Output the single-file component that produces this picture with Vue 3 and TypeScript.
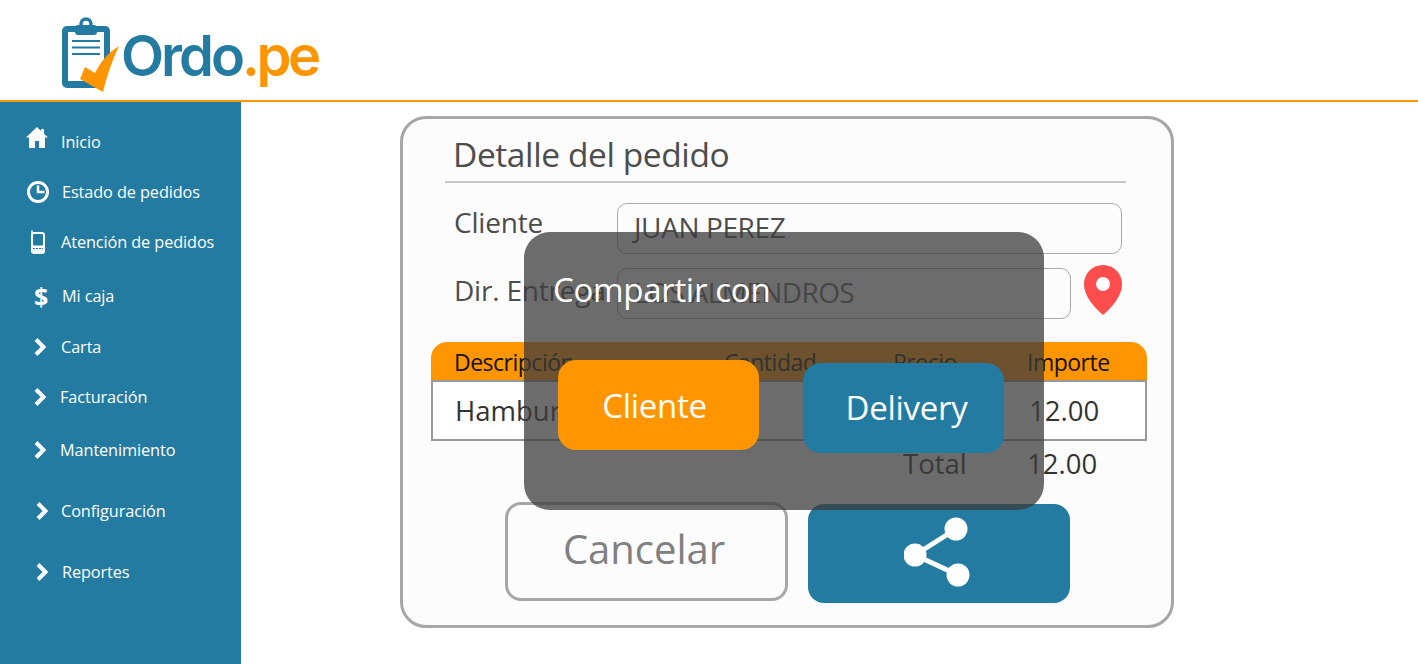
<script setup lang="ts">
interface IMenuItem {
  label: string
  icon: string
  iconX: number
  textX: number
  gap: number
}

const menu: IMenuItem[] = [
  { label: 'Inicio', icon: 'home', iconX: 37, textX: 61, gap: 0 },
  { label: 'Estado de pedidos', icon: 'clock', iconX: 38, textX: 62, gap: 10 },
  { label: 'Atención de pedidos', icon: 'phone', iconX: 38, textX: 61, gap: 10 },
  { label: 'Mi caja', icon: 'dollar', iconX: 41, textX: 62, gap: 14 },
  { label: 'Carta', icon: 'chevron', iconX: 40, textX: 61, gap: 11 },
  { label: 'Facturación', icon: 'chevron', iconX: 40, textX: 60, gap: 10 },
  { label: 'Mantenimiento', icon: 'chevron', iconX: 40, textX: 60, gap: 13 },
  { label: 'Configuración', icon: 'chevron', iconX: 42, textX: 61, gap: 21 },
  { label: 'Reportes', icon: 'chevron', iconX: 42, textX: 62, gap: 21 }
]
</script>

<template>
  <div class="page">
    <header class="topbar">
      <svg class="logo-icon" width="60" height="76" viewBox="0 0 60 76">
        <rect x="1" y="9" width="48" height="62" rx="5" fill="#237ba1" />
        <rect x="7" y="15" width="36" height="49" fill="#fff" />
        <circle cx="25" cy="7" r="5" fill="none" stroke="#237ba1" stroke-width="3.5" />
        <rect x="14" y="8" width="22" height="10" rx="3" fill="#237ba1" />
        <path d="M11 24h28M11 30.500h28M11 37h28" stroke="#237ba1" stroke-width="2" />
        <path d="M40 71h10v-30z" fill="#fff" />
        <path d="M19 62l5-12 10 6C40 44 48 35 58 29 52 42 46 58 42 75z" fill="#ff9500" />
      </svg>
      <div class="logo-text">Ordo<span class="logo-accent">.pe</span></div>
    </header>

    <div class="body-row">
      <aside class="sidebar">
        <ul class="menu">
          <li
            v-for="item in menu"
            :key="item.label"
            class="menu-item"
            :style="{ marginTop: item.gap + 'px' }"
          >
            <span class="menu-icon-cell" :style="{ width: item.textX + 'px' }">
              <span class="menu-icon" :style="{ marginLeft: item.iconX - 12 + 'px' }">
                <svg v-if="item.icon === 'home'" class="icon-home" width="24" height="24" viewBox="0 0 24 24" fill="#fff">
                  <path d="M12 1L1 11.500h3V22h6v-7h4v7h6V11.500h3l-4-3.800V3h-3v1.900z" />
                </svg>
                <svg v-else-if="item.icon === 'clock'" width="24" height="24" viewBox="0 0 24 24" fill="none" stroke="#fff">
                  <circle cx="12" cy="12" r="9.500" stroke-width="3" />
                  <path d="M12 5.500v6.500h6.500" stroke-width="2.500" />
                </svg>
                <svg v-else-if="item.icon === 'phone'" width="24" height="24" viewBox="0 0 24 24">
                  <path d="M6 0.500v3" stroke="#fff" stroke-width="1.500" />
                  <rect x="5" y="2" width="14" height="22" rx="3" fill="#fff" />
                  <rect x="7" y="4" width="10" height="11.500" rx="1" fill="#237ba1" />
                  <path d="M7 18.500h10" stroke="#237ba1" stroke-width="1" stroke-dasharray="2 1" />
                </svg>
                <span v-else-if="item.icon === 'dollar'" class="dollar">$</span>
                <svg v-else width="24" height="24" viewBox="0 0 24 24" fill="none" stroke="#fff">
                  <path d="M8 4.500l7.500 7.500L8 19.500" stroke-width="4" />
                </svg>
              </span>
            </span>
            <span class="menu-label">{{ item.label }}</span>
          </li>
        </ul>
      </aside>

      <main class="content">
        <section class="card">
          <h1 class="card-title">Detalle del pedido</h1>

          <div class="field field-client">
            <label class="field-label">Cliente</label>
            <div class="field-input wide">JUAN PEREZ</div>
          </div>
          <div class="field field-address">
            <label class="field-label">Dir. Entrega</label>
            <div class="field-input narrow">LOS ALMENDROS</div>
            <svg class="pin" width="38" height="50" viewBox="0 0 38 50">
              <path
                d="M19 0C8.500 0 0 8.500 0 19c0 13 12 25 19 31 7-6 19-18 19-31C38 8.500 29.500 0 19 0z"
                fill="#ff4d4d"
              />
              <circle cx="19" cy="19" r="7" fill="#fcfcfc" />
            </svg>
          </div>

          <div class="table">
            <div class="table-row table-head">
              <span>Descripción</span>
              <span>Cantidad</span>
              <span>Precio</span>
              <span>Importe</span>
            </div>
            <div class="table-row table-line">
              <span class="line-name">Hamburguesa</span>
              <span></span>
              <span></span>
              <span>12.00</span>
            </div>
            <div class="table-row table-total">
              <span></span>
              <span></span>
              <span class="total-label">Total</span>
              <span>12.00</span>
            </div>
          </div>

          <div class="actions">
            <button class="btn-cancel">Cancelar</button>
            <button class="btn-share">
              <svg width="70" height="74" viewBox="0 0 70 74" fill="#fff">
                <path d="M11 38L52 12M11 38l43 20" stroke="#fff" stroke-width="5" />
                <circle cx="52" cy="12" r="11.500" />
                <circle cx="11" cy="38" r="11.500" />
                <circle cx="54" cy="58" r="11.500" />
              </svg>
            </button>
          </div>
        </section>

        <div class="share-panel">
          <div class="share-title">Compartir con</div>
          <div class="share-buttons">
            <button class="share-option orange">Cliente</button>
            <button class="share-option blue">Delivery</button>
          </div>
        </div>
      </main>
    </div>
  </div>
</template>

<style>
html,
body {
  margin: 0;
  background: #fff;
}
</style>

<style scoped>
.page {
  display: flex;
  flex-direction: column;
  height: 664px;
  overflow: hidden;
  font-family: "Open Sans", "Noto Sans", sans-serif;
}

.topbar {
  display: flex;
  align-items: flex-start;
  box-sizing: border-box;
  height: 102px;
  padding: 17px 0 0 61px;
  border-bottom: 2px solid #ff9500;
  background: #fff;
}

.logo-icon {
  flex: none;
}

.logo-text {
  margin: 9px 0 0 0;
  font-family: "Inter", sans-serif;
  font-size: 56px;
  font-weight: 600;
  line-height: 60px;
  letter-spacing: -3px;
  color: #237ba1;
}

.logo-accent {
  letter-spacing: -3.500px;
  color: #ff9500;
}

.body-row {
  position: relative;
  display: flex;
  flex: 1;
}

.sidebar {
  flex: none;
  width: 241px;
  background: #237ba1;
}

.menu {
  margin: 0;
  padding: 20px 0 0;
  list-style: none;
}

.menu-item {
  display: flex;
  align-items: center;
  height: 40px;
  color: #fff;
  font-size: 16.300px;
  letter-spacing: -0.1px;
}

.menu-icon-cell {
  display: block;
  flex: none;
}

.menu-icon {
  display: block;
  width: 24px;
  height: 24px;
  text-align: center;
}

.icon-home {
  margin-top: -4px;
}

.dollar {
  font-size: 25px;
  font-weight: 700;
  line-height: 24px;
}

.content {
  flex: 1;
  padding: 14px 0 0 159px;
}

.card {
  box-sizing: border-box;
  width: 774px;
  height: 512px;
  padding: 11px 28px 0 28px;
  border: 3px solid #a6a6a6;
  border-radius: 26px;
  background: #fcfcfc;
  color: #4d4d4d;
}

.card-title {
  box-sizing: border-box;
  width: 681px;
  height: 53px;
  margin: 0 0 20px 14px;
  padding-left: 8px;
  border-bottom: 2px solid #c8c8c8;
  font-size: 33.500px;
  font-weight: 400;
  line-height: 48px;
  letter-spacing: -0.4px;
}

.field {
  display: flex;
  align-items: flex-start;
  margin-left: 23px;
}

.field-client {
  margin-bottom: 14px;
}

.field-address {
  margin-bottom: 23px;
}

.field-label {
  flex: none;
  width: 163px;
  font-size: 28px;
  line-height: 38px;
  letter-spacing: -0.2px;
}

.field-address .field-label {
  margin-top: 3px;
}

.field-input {
  box-sizing: border-box;
  height: 51px;
  padding: 4px 0 0 16px;
  border: 1.500px solid #aaa;
  border-radius: 10px;
  font-size: 28px;
  line-height: 38px;
  letter-spacing: -0.4px;
}

.wide {
  width: 505px;
}

.narrow {
  width: 454px;
  color: #666;
  letter-spacing: -0.6px;
}

.pin {
  flex: none;
  margin: -3px 0 0 13px;
}

.table {
  width: 716px;
}

.table-row {
  display: grid;
  grid-template-columns: 270px 169px 134px 1fr;
  box-sizing: border-box;
  padding-left: 23px;
  align-items: center;
}

.table-head {
  height: 38px;
  padding-top: 2px;
  border-radius: 16px 16px 0 0;
  background: #ff9500;
  color: #111;
  font-size: 23px;
  letter-spacing: -0.5px;
}

.table-line {
  height: 61px;
  border: 2px solid #999;
  background: #fff;
  color: #333;
  font-size: 27.500px;
}

.line-name {
  margin-left: -1px;
}

.table-total {
  height: 45px;
  color: #333;
  font-size: 27.500px;
}

.total-label {
  margin-left: 10px;
}

.actions {
  display: flex;
  align-items: flex-start;
  gap: 20px;
  margin: 16px 0 0 74px;
}

.btn-cancel {
  box-sizing: border-box;
  width: 283px;
  height: 99px;
  padding: 0 5px 6px 0;
  border: 3px solid #a6a6a6;
  border-radius: 16px;
  background: transparent;
  color: #808080;
  font-family: inherit;
  font-size: 40px;
}

.btn-share {
  display: flex;
  align-items: center;
  justify-content: center;
  width: 262px;
  height: 99px;
  margin-top: 2px;
  border: none;
  border-radius: 16px;
  background: #237ba1;
}

.share-panel {
  position: absolute;
  left: 524px;
  top: 130px;
  box-sizing: border-box;
  width: 520px;
  height: 278px;
  padding: 36px 0 0 29px;
  border-radius: 26px;
  background: rgba(60, 60, 60, 0.75);
  color: #fff;
}

.share-title {
  font-size: 33px;
  line-height: 44px;
  letter-spacing: -0.3px;
}

.share-buttons {
  display: flex;
  align-items: flex-start;
  gap: 44px;
  margin: 48px 0 0 5px;
}

.share-option {
  width: 201px;
  height: 90px;
  border: none;
  border-radius: 18px;
  color: #fff;
  font-family: inherit;
  font-size: 33px;
  letter-spacing: -0.3px;
}

.orange {
  padding: 0 8px 0 0;
  background: #ff9500;
}

.blue {
  margin-top: 3px;
  padding: 0 0 2px 6px;
  background: #237ba1;
}
</style>
